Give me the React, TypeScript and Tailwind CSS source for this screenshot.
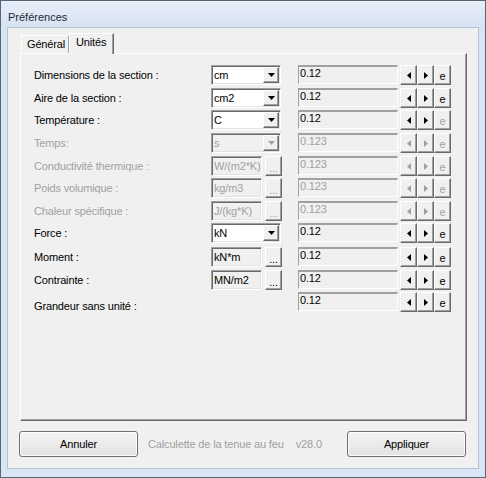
import React from 'react';

type Row = {
  label: string;
  kind: 'combo' | 'text' | 'none';
  unit?: string;
  value: string;
  disabled?: boolean;
  eOff?: boolean;
  h: number;
};

const rows: Row[] = [
  { label: 'Dimensions de la section :', kind: 'combo', unit: 'cm', value: '0.12', h: 23 },
  { label: 'Aire de la section :', kind: 'combo', unit: 'cm2', value: '0.12', h: 22 },
  { label: 'Température :', kind: 'combo', unit: 'C', value: '0.12', eOff: true, h: 23 },
  { label: 'Temps:', kind: 'combo', unit: 's', value: '0.123', disabled: true, h: 23 },
  { label: 'Conductivité thermique :', kind: 'text', unit: 'W/(m2*K)', value: '0.123', disabled: true, h: 22 },
  { label: 'Poids volumique :', kind: 'text', unit: 'kg/m3', value: '0.123', disabled: true, h: 23 },
  { label: 'Chaleur spécifique :', kind: 'text', unit: 'J/(kg*K)', value: '0.123', disabled: true, h: 22 },
  { label: 'Force :', kind: 'combo', unit: 'kN', value: '0.12', h: 24 },
  { label: 'Moment :', kind: 'text', unit: 'kN*m', value: '0.12', h: 23 },
  { label: 'Contrainte :', kind: 'text', unit: 'MN/m2', value: '0.12', h: 22 },
  { label: 'Grandeur sans unité :', kind: 'none', value: '0.12', h: 22 },
];

const raised =
  'bg-[#f0f0f0] border-t border-l border-t-white border-l-white border-r border-b border-r-[#696969] border-b-[#696969] shadow-[inset_-1px_-1px_0_#a0a0a0]';
const sunken =
  'border-t border-l border-t-[#a0a0a0] border-l-[#a0a0a0] border-r border-b border-r-white border-b-white shadow-[inset_1px_1px_0_#696969,inset_-1px_-1px_0_#e3e3e3]';

function Arrow({ dir, off }: { dir: 'l' | 'r' | 'd'; off?: boolean }) {
  const fill = off ? '#a0a0a0' : '#000';
  if (dir === 'd')
    return (
      <svg width="7" height="4" viewBox="0 0 7 4">
        <path d="M0 0H7L3.5 4Z" fill={fill} />
      </svg>
    );
  return (
    <svg width="4" height="7" viewBox="0 0 4 7">
      <path d={dir === 'l' ? 'M4 0L0 3.5L4 7Z' : 'M0 0L4 3.5L0 7Z'} fill={fill} />
    </svg>
  );
}

function Combo({ unit, off }: { unit: string; off?: boolean }) {
  return (
    <div className={`w-[70px] h-[20px] flex items-stretch ${sunken} ${off ? 'bg-[#f0f0f0]' : 'bg-white'}`}>
      <span className={`flex-1 pl-[2px] pt-[2px] leading-[14px] ${off ? 'text-[#a0a0a0]' : ''}`}>{unit}</span>
      <div className={`w-[16px] m-[1px] flex items-center justify-center ${raised}`}>
        <Arrow dir="d" off={off} />
      </div>
    </div>
  );
}

function TextUnit({ unit, off }: { unit: string; off?: boolean }) {
  return (
    <div className="flex gap-[3px]">
      <div className={`w-[51px] h-[20px] bg-[#f0f0f0] overflow-hidden whitespace-nowrap pl-[2px] pt-[2px] leading-[14px] ${sunken} ${off ? 'text-[#a0a0a0]' : ''}`}>
        {unit}
      </div>
      <div className={`w-[17px] h-[20px] flex items-end justify-center pb-[3px] leading-[8px] ${raised} ${off ? 'text-[#a0a0a0]' : ''}`}>
        ...
      </div>
    </div>
  );
}

function UnitRow({ r }: { r: Row }) {
  const off = r.disabled;
  return (
    <div className="flex items-start" style={{ height: r.h }}>
      <div className={`w-[177px] h-[20px] flex items-center whitespace-nowrap ${r.kind === 'none' ? 'pt-[9px]' : ''} ${off ? 'text-[#a0a0a0]' : ''}`}>
        {r.label}
      </div>
      <div className="w-[87px]">
        {r.kind === 'combo' && <Combo unit={r.unit!} off={off} />}
        {r.kind === 'text' && <TextUnit unit={r.unit!} off={off} />}
      </div>
      <div className={`w-[100px] h-[19px] bg-[#f0f0f0] pl-[1px] leading-[12px] border-t-2 border-l border-t-[#a0a0a0] border-l-[#a0a0a0] border-b border-r border-b-white border-r-white ${off ? 'text-[#a0a0a0]' : ''}`}>
        {r.value}
      </div>
      <div className="ml-[2px] flex">
        <div className={`w-[17px] h-[20px] flex items-center justify-center ${raised}`}>
          <Arrow dir="l" off={off} />
        </div>
        <div className={`w-[17px] h-[20px] flex items-center justify-center ${raised}`}>
          <Arrow dir="r" off={off} />
        </div>
        <div className={`w-[17px] h-[20px] flex items-center justify-center pt-[2px] ${raised} ${off || r.eOff ? 'text-[#a0a0a0]' : ''}`}>
          e
        </div>
      </div>
    </div>
  );
}

export default function App() {
  return (
    <div className="w-[486px] h-[478px] flex flex-col bg-[#dae5f3] border border-[#55657a] font-['Liberation_Sans',Arial,sans-serif] text-[11px] tracking-[-0.15px] text-black select-none">
      <div className="h-[26px] pl-[7px] pt-[10px] leading-[12px] bg-gradient-to-b from-[#e6edf7] to-[#d7e3f1] text-[#1e2a3a] tracking-normal">
        Préférences
      </div>
      <div className="mx-[6px] h-[442px] bg-[#f0f0f0] border border-[#b3c3d6] flex flex-col">
        <div className="h-[25px] pl-[12px] flex items-end">
          <div className="ml-[1px] w-[48px] h-[18px] bg-[#f0f0f0] border-t border-l border-white border-r border-r-[#a0a0a0] pl-[5px] pt-[2px] leading-[13px] rounded-t-[1px]">
            Général
          </div>
          <div className="relative z-10 -mb-px w-[45px] h-[21px] bg-[#f0f0f0] border-t border-l border-white border-r border-r-[#696969] shadow-[inset_-1px_0_0_#a0a0a0] pl-[6px] pt-[2px] leading-[13px] rounded-t-[1px]">
            Unités
          </div>
        </div>
        <div className="ml-[12px] w-[447px] h-[368px] border-t border-l border-white border-r border-b border-r-[#696969] border-b-[#696969] shadow-[inset_-1px_-1px_0_#a0a0a0] pt-[11px] pl-[13px]">
          {rows.map((r) => (
            <UnitRow key={r.label} r={r} />
          ))}
        </div>
        <div className="mt-[10px] flex items-center">
          <button className="ml-[11px] w-[119px] h-[26px] rounded-[3px] border border-[#707070] bg-gradient-to-b from-[#f3f3f3] to-[#e3e3e3] shadow-[inset_0_0_0_1px_#fcfcfc]">
            Annuler
          </button>
          <span className="ml-[10px] text-[#a0a0a0]">Calculette de la tenue au feu</span>
          <span className="ml-[12px] text-[#a0a0a0]">v28.0</span>
          <button className="ml-auto mr-[12px] w-[119px] h-[26px] rounded-[3px] border border-[#707070] bg-gradient-to-b from-[#f3f3f3] to-[#e3e3e3] shadow-[inset_0_0_0_1px_#fcfcfc]">
            Appliquer
          </button>
        </div>
      </div>
    </div>
  );
}
